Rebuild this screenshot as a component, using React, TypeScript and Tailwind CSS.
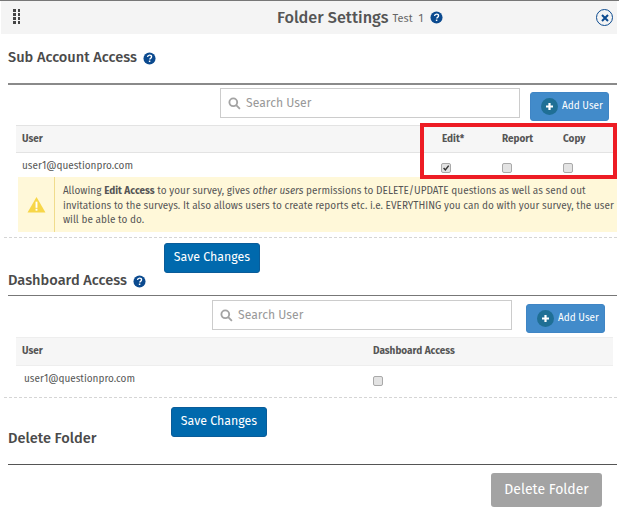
import { useState } from "react";

const font = { fontFamily: '"Fira Sans", Roboto, "Liberation Sans", sans-serif' };

function HelpIcon({ className }: { className: string }) {
  return (
    <svg viewBox="0 0 14 14" className={className}>
      <circle cx="7" cy="7" r="6.5" fill="#0b4a8f" />
      <path d="M4.9 5.4c.1-1.3 1-2 2.2-2 1.3 0 2.1.8 2.1 1.8 0 .9-.5 1.3-1.1 1.7-.5.3-.7.6-.7 1.1" fill="none" stroke="#fff" strokeWidth="1.5" />
      <rect x="6.3" y="9.2" width="1.6" height="1.6" fill="#fff" />
    </svg>
  );
}

function SearchBox({ margin }: { margin: string }) {
  return (
    <div className={`flex h-[30px] w-[300px] items-center border border-[#cccccc] bg-white pl-[7px] ${margin}`}>
      <svg viewBox="0 0 14 14" className="h-[13px] w-[13px]" fill="none" stroke="#a3a3a3" strokeWidth="2">
        <circle cx="5.7" cy="5.7" r="4.2" />
        <path d="M8.8 8.8l4 4" />
      </svg>
      <span className="ml-[5px] text-[12.2px] text-[#999999]">Search User</span>
    </div>
  );
}

function AddUser({ margin }: { margin: string }) {
  return (
    <button className={`flex h-[29px] w-[79px] items-center rounded-[3px] border border-[#3f85c5] bg-[#428bca] pl-[10px] text-[10px] font-normal text-white ${margin}`}>
      <span className="flex h-[17px] w-[17px] items-center justify-center rounded-full bg-[#1f6f95]">
        <svg viewBox="0 0 9 9" className="h-[9px] w-[9px]">
          <path d="M4.5 1v7M1 4.5h7" stroke="#fff" strokeWidth="2.2" />
        </svg>
      </span>
      <span className="ml-[4px]">Add User</span>
    </button>
  );
}

function SaveButton({ margin }: { margin: string }) {
  return (
    <button className={`block h-[30px] w-[96px] rounded-[3px] border border-[#0a5c99] bg-[#0069ad] pb-[2px] text-[12.4px] font-normal text-white ${margin}`}>
      Save Changes
    </button>
  );
}

function Box({ checked = false }: { checked?: boolean }) {
  return (
    <span className="flex h-[10px] w-[10px] items-center justify-center rounded-[2px] border border-[#a9a9a9] bg-[#e3e3e3]">
      {checked && (
        <svg viewBox="0 0 10 10" className="h-[10px] w-[10px]">
          <path d="M2 5l2.2 2.4L8.4 2" fill="none" stroke="#333" strokeWidth="1.8" />
        </svg>
      )}
    </span>
  );
}

export default function App() {
  const [tab] = useState("folder");

  return (
    <div data-tab={tab} style={font} className="relative h-[511px] w-[619px] overflow-hidden border-t border-[#777777] bg-white text-[#555555]">
      {/* Title bar */}
      <div className="relative mx-px flex h-[33px] w-[616px] items-center bg-[#f4f4f4] pl-[276px]">
        <span className="absolute left-[12px] top-[8px] grid grid-cols-2 gap-x-[2px] gap-y-[1px]">
          {Array.from({ length: 8 }).map((_, i) => (
            <span key={i} className="h-[3px] w-[2.5px] bg-[#444444]" />
          ))}
        </span>
        <span className="mt-[1px] text-[16.3px] font-medium text-[#555555]">Folder Settings</span>
        <span className="ml-[4px] mt-[3px] text-[11px] text-[#666666]">Test&nbsp; 1</span>
        <HelpIcon className="ml-[7px] h-[13px] w-[13px]" />
        <span className="absolute left-[595px] top-[8px] flex h-[17px] w-[17px] items-center justify-center rounded-full border-[1.5px] border-[#0b4a8f]">
          <svg viewBox="0 0 8 8" className="h-[8px] w-[8px]">
            <path d="M1 1l6 6M7 1l-6 6" stroke="#0b4a8f" strokeWidth="2" />
          </svg>
        </span>
      </div>

      {/* Sub account */}
      <div className="ml-[8px] mt-[15px] flex h-[18px] items-center">
        <span className="text-[14.6px] font-medium text-[#4a4a4a]">Sub Account Access</span>
        <HelpIcon className="ml-[6px] h-[13px] w-[13px]" />
      </div>
      <div className="ml-[8px] mt-[16px] h-[2px] w-[609px] bg-[#8a8a8a]" />
      <div className="flex h-[40px] items-start pt-[3px]">
        <SearchBox margin="ml-[220px]" />
        <AddUser margin="ml-[10px] mt-[4px]" />
      </div>
      <div className="ml-[16px] flex h-[28px] w-[599px] items-center border-y border-[#e3e3e3] bg-[#f6f6f6] text-[10px] font-bold text-[#555555]">
        <span className="ml-[6px] w-[420px]">User</span>
        <span className="w-[60px]">Edit*</span>
        <span className="w-[61px]">Report</span>
        <span>Copy</span>
      </div>
      <div className="ml-[16px] flex h-[24px] w-[599px] items-center text-[10px]">
        <span className="ml-[6px] mt-[2px] w-[419px]">user1@questionpro.com</span>
        <span className="mt-[6px] w-[61px]"><Box checked /></span>
        <span className="mt-[6px] w-[61px]"><Box /></span>
        <span className="mt-[6px]"><Box /></span>
      </div>
      <div className="ml-[18px] flex h-[55px] w-[599px] bg-[#fff8d9] text-[10px] leading-[14.5px]">
        <div className="flex w-[37px] items-center justify-center border-r border-[#f0dc8c]">
          <svg viewBox="0 0 20 18" className="ml-[1px] h-[17px] w-[19px]">
            <path d="M10 1L19.5 17.5H.5z" fill="#f7d648" />
            <rect x="9" y="6" width="2" height="6.5" fill="#fff" />
            <rect x="9" y="13.5" width="2" height="2" fill="#fff" />
          </svg>
        </div>
        <p className="ml-[8px] mt-[7px] w-[556px] tracking-[0.02px]">
          Allowing <b className="font-bold">Edit Access</b> to your survey, gives <i>other users</i> permissions to DELETE/UPDATE questions as well as send out invitations to the surveys. It also allows users to create reports etc. i.e. EVERYTHING you can do with your survey, the user will be able to do.
        </p>
      </div>
      <div className="ml-[4px] mt-[5px] w-[613px] border-t border-dashed border-[#d5d5d5]" />
      <SaveButton margin="ml-[164px] mt-[5px]" />

      {/* Dashboard */}
      <div className="ml-[8px] mt-[-1px] flex h-[18px] items-center">
        <span className="text-[14.6px] font-medium text-[#4a4a4a]">Dashboard Access</span>
        <HelpIcon className="ml-[6px] h-[13px] w-[13px]" />
      </div>
      <div className="ml-[8px] mt-[5px] h-px w-[609px] bg-[#777777]" />
      <div className="flex h-[41px] items-start pt-[4px]">
        <SearchBox margin="ml-[212px]" />
        <AddUser margin="ml-[14px] mt-[4px]" />
      </div>
      <div className="ml-[16px] flex h-[29px] w-[597px] items-center border-y border-[#eeeeee] bg-[#f6f6f6] text-[10px] font-bold">
        <span className="ml-[6px] w-[351px]">User</span>
        <span>Dashboard Access</span>
      </div>
      <div className="ml-[16px] flex h-[31px] items-center text-[10px]">
        <span className="ml-[8px] w-[349px] -translate-y-[2px]">user1@questionpro.com</span>
        <span className="-translate-y-[1px]"><Box /></span>
      </div>
      <div className="ml-[4px] w-[613px] border-t border-dashed border-[#d5d5d5]" />
      <SaveButton margin="ml-[171px] mt-[9px]" />

      {/* Delete */}
      <div className="ml-[8px] mt-[-8px] h-[18px] text-[14.6px] font-medium leading-[18px] text-[#4a4a4a]">Delete Folder</div>
      <div className="ml-[8px] mt-[17px] h-px w-[609px] bg-[#555555]" />
      <button className="ml-[491px] mt-[8px] block h-[34px] w-[111px] rounded-[3px] bg-[#a3a3a3] pb-[2px] text-[14px] font-normal text-white">
        Delete Folder
      </button>

      {/* Highlight box over the permission columns */}
      <div className="absolute left-[420px] top-[122px] h-[56px] w-[197px] border-4 border-[#ed1c24]" />
    </div>
  );
}
